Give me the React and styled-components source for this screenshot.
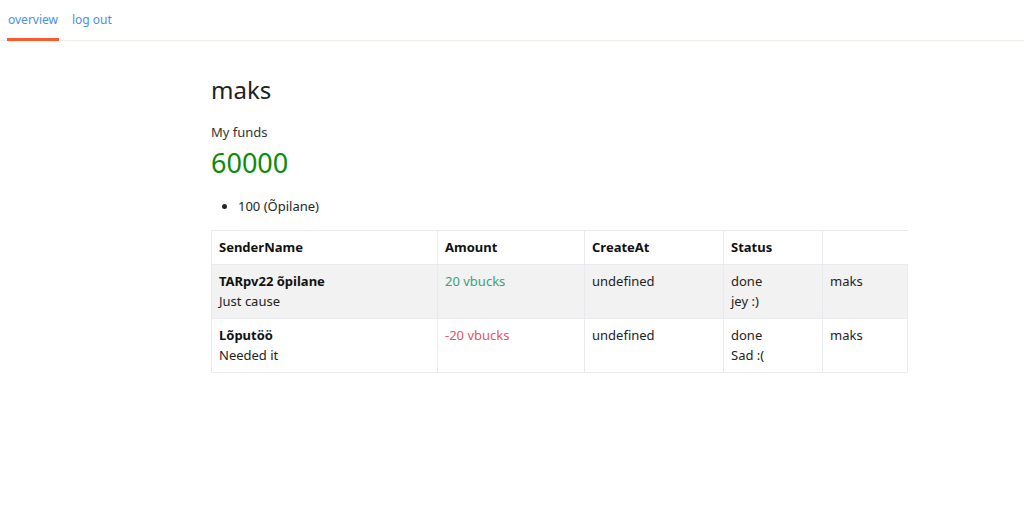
import React from "react";
import styled, { createGlobalStyle } from "styled-components";

const Global = createGlobalStyle`
  html, body { margin: 0; padding: 0; background: #fff; }
  body { font-family: "Noto Sans", "Open Sans", sans-serif; color: #212529; font-size: 14px; }
`;

const Nav = styled.nav`
  display: flex;
  gap: 12px;
  padding: 0 0 0 7px;
  border-bottom: 1px solid #f3ede9;
  height: 41px;
  box-sizing: border-box;
`;

const Tab = styled.a`
  display: flex;
  align-items: center;
  padding: 0 1px;
  font-size: 12px;
  color: #4a90e2;
  text-decoration: none;
  border-bottom: 3px solid ${(p) => (p.$active ? "#fd5a2a" : "transparent")};
  margin-bottom: -1px;
  cursor: pointer;
`;

const Main = styled.main`
  width: 696px;
  margin: 0 0 0 211px;
  padding-top: 33px;
`;

const Name = styled.h1`
  font-size: 24px;
  font-weight: 400;
  margin: 0 0 16px;
  line-height: 32px;
  color: #222;
`;

const Label = styled.div`
  font-size: 13px;
  line-height: 20px;
  color: #333;
  margin-bottom: 3px;
`;

const Funds = styled.div`
  font-size: 27px;
  line-height: 36px;
  color: #0c8a0c;
  margin-bottom: 15px;
`;

const List = styled.ul`
  margin: 0 0 14px;
  padding-left: 27px;
  font-size: 13px;
  line-height: 20px;
`;

const Table = styled.table`
  width: 696px;
  table-layout: fixed;
  border-collapse: collapse;
  font-size: 13px;
  line-height: 20px;
`;

const Th = styled.th`
  text-align: left;
  font-weight: 700;
  padding: 6px 7px 7px;
  border-top: 1px solid #e8eaed;
  border-left: 1px solid #e8eaed;
  border-bottom: 1px solid #e8eaed;
  color: #111;
`;

const Tr = styled.tr`
  background: ${(p) => (p.$shade ? "#f2f2f2" : "#fff")};
`;

const Td = styled.td`
  vertical-align: top;
  padding: 6px 7px 7px;
  border: 1px solid #e8eaed;
  color: ${(p) => p.$color || "#222"};
`;

const Strong = styled.div`
  font-weight: 700;
  color: #111;
`;

const rows = [
  { title: "TARpv22 õpilane", note: "Just cause", amount: "20 vbucks", color: "#3f9f74", status: "done", comment: "jey :)", user: "maks" },
  { title: "Lõputöö", note: "Needed it", amount: "-20 vbucks", color: "#e25563", status: "done", comment: "Sad :(", user: "maks" },
];

const widths = [226, 147, 139, 99, 85];

export default function App() {
  return (
    <>
      <Global />
      <Nav>
        <Tab $active>overview</Tab>
        <Tab>log out</Tab>
      </Nav>
      <Main>
        <Name>maks</Name>
        <Label>My funds</Label>
        <Funds>60000</Funds>
        <List>
          <li>100 (Õpilane)</li>
        </List>
        <Table>
          <colgroup>
            {widths.map((w, i) => (
              <col key={i} style={{ width: w }} />
            ))}
          </colgroup>
          <thead>
            <tr>
              <Th>SenderName</Th>
              <Th>Amount</Th>
              <Th>CreateAt</Th>
              <Th>Status</Th>
              <Th></Th>
            </tr>
          </thead>
          <tbody>
            {rows.map((r, i) => (
              <Tr key={i} $shade={i === 0}>
                <Td>
                  <Strong>{r.title}</Strong>
                  <div>{r.note}</div>
                </Td>
                <Td $color={r.color}>{r.amount}</Td>
                <Td>undefined</Td>
                <Td>
                  <div>{r.status}</div>
                  <div>{r.comment}</div>
                </Td>
                <Td>{r.user}</Td>
              </Tr>
            ))}
          </tbody>
        </Table>
      </Main>
    </>
  );
}
